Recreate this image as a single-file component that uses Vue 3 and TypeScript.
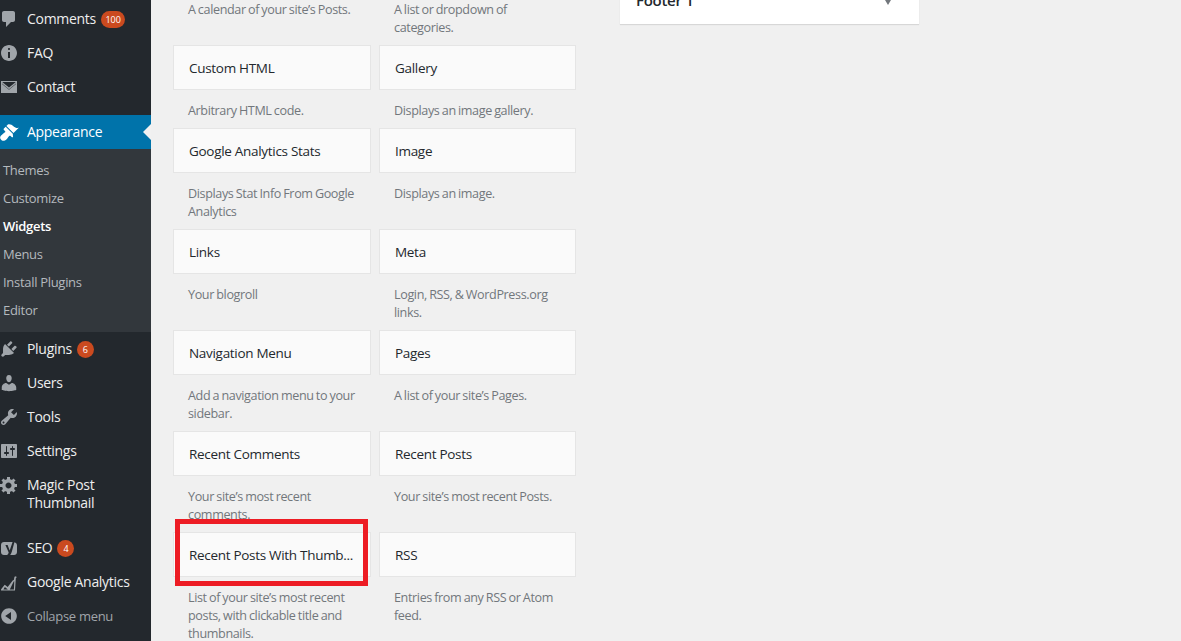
<script setup lang="ts">
interface MenuItem {
  label: string[];
  icon: string;
  badge?: string;
  gapBefore?: boolean;
  current?: boolean;
  muted?: boolean;
}
interface Widget {
  title: string;
  desc: string;
  mark?: boolean;
}

const ICONS: Record<string, string> = {
  comments: 'M5 2h9c1.1 0 2 .9 2 2v7c0 1.1-.9 2-2 2h-2l-5 5v-5H5c-1.1 0-2-.9-2-2V4c0-1.1.9-2 2-2z',
  info: 'M10 2c4.42 0 8 3.58 8 8s-3.58 8-8 8-8-3.58-8-8 3.58-8 8-8zm1 4c0-.55-.45-1-1-1s-1 .45-1 1 .45 1 1 1 1-.45 1-1zm0 9V9H9v6h2z',
  mail: 'M2 4h16v12H2V4zm1.5 1.2L10 10.6l6.5-5.4v-.2h-13v.2zM17 6.6l-7 5.6-7-5.6V7l7 5.8L17 7v-.4z',
  brush: 'M14.48 11.06L7.41 3.99l1.5-1.5c.5-.56 2.3-.47 3.51.32 1.21.8 1.43 1.28 2.91 2.1 1.18.64 2.45 1.26 4.45.85zm-.71.71L6.7 4.7 4.93 6.47c-.39.39-.39 1.02 0 1.41l1.06 1.06c.39.39.39 1.03 0 1.42-.6.6-1.43 1.11-2.21 1.69-.35.26-.7.53-1.01.84C1.43 13.71.96 15.19 1.2 16.3c.2.9 1.6 2.3 2.5 2.5 1.11.24 2.59-.23 3.94-1.58.31-.31.58-.66.84-1.01.58-.78 1.09-1.61 1.69-2.21.39-.39 1.03-.39 1.42 0l1.06 1.06c.39.39 1.02.39 1.41 0z',
  plugin: 'M13.11 4.36L9.87 7.6 8 5.73l3.24-3.24c.35-.34 1.05-.2 1.56.32.52.51.66 1.21.31 1.55zm-8 1.77l.91-1.12 9.01 9.01-1.19.84c-.71.71-2.63 1.16-3.82 1.16H6.14L4.9 17.26c-.59.59-1.54.59-2.12 0-.59-.58-.59-1.53 0-2.12l1.24-1.24v-3.88c0-1.13.4-3.19 1.09-3.89zm7.26 3.97l3.24-3.24c.34-.35 1.04-.21 1.55.31.52.51.66 1.21.31 1.55l-3.24 3.25z',
  users: 'M10 9.25c-2.27 0-2.73-3.44-2.73-3.44C7 4.02 7.82 2 9.97 2c2.16 0 2.98 2.02 2.71 3.81 0 0-.41 3.44-2.68 3.44zm0 2.57L12.72 10c2.39 0 4.52 2.33 4.52 4.53v2.49s-3.65 1.13-7.24 1.13c-3.65 0-7.24-1.13-7.24-1.13v-2.49c0-2.25 1.94-4.48 4.47-4.48z',
  tools: 'M16.68 9.77c-1.34 1.34-3.3 1.67-4.95.99l-5.41 6.52c-.99.99-2.59.99-3.58 0s-.99-2.59 0-3.57l6.52-5.42c-.68-1.65-.35-3.61.99-4.95 1.28-1.28 3.12-1.62 4.72-1.06l-2.89 2.89 2.82 2.82 2.86-2.87c.53 1.58.18 3.39-1.08 4.65zM3.81 16.21c.4.39 1.04.39 1.43 0 .4-.4.4-1.04 0-1.43-.39-.4-1.03-.4-1.43 0-.39.39-.39 1.03 0 1.43z',
  settings: 'M18 16V4c0-.55-.45-1-1-1H3c-.55 0-1 .45-1 1v12c0 .55.45 1 1 1h14c.55 0 1-.45 1-1zM8 11h1c.55 0 1 .45 1 1s-.45 1-1 1H8v1.5c0 .28-.22.5-.5.5s-.5-.22-.5-.5V13H6c-.55 0-1-.45-1-1s.45-1 1-1h1V5.5c0-.28.22-.5.5-.5s.5.22.5.5V11zm5-2h-1c-.55 0-1-.45-1-1s.45-1 1-1h1V5.5c0-.28.22-.5.5-.5s.5.22.5.5V7h1c.55 0 1 .45 1 1s-.45 1-1 1h-1v5.5c0 .28-.22.5-.5.5s-.5-.22-.5-.5V9z',
  gear: 'M18 12h-2.18c-.17.7-.44 1.35-.81 1.93l1.54 1.54-2.1 2.1-1.54-1.54c-.58.36-1.23.63-1.91.79V19H8v-2.18c-.68-.16-1.33-.43-1.91-.79l-1.54 1.54-2.12-2.12 1.54-1.54c-.36-.58-.63-1.23-.79-1.91H1V9.03h2.17c.16-.7.44-1.35.8-1.94L2.43 5.55l2.1-2.1 1.54 1.54c.58-.37 1.24-.64 1.93-.81V2h3v2.18c.68.16 1.33.43 1.91.79l1.54-1.54 2.12 2.12-1.54 1.54c.36.59.64 1.24.8 1.94H18V12zm-8.5 1.5c1.66 0 3-1.34 3-3s-1.34-3-3-3-3 1.34-3 3 1.34 3 3 3z',
  seo: 'M5 4h8.6l-1.9 5.6-1 3L8.6 7H6.4l3.3 7.6c-.3 1.2-.8 1.9-1.6 2.4H5c-1.7 0-3-1.3-3-3V7c0-1.7 1.3-3 3-3zm10.4.2C16.9 4.6 18 5.6 18 7.2v6.8c0 1.7-1.3 3-3 3h-3.8c.7-.9 1.2-2 1.6-3.2l2.6-9.6z',
  chart: 'M2 18.6l.1-1.4 3.6-4.4 3 2.2 5-6.6 1.1-.3.7-3.3 1.6-.6.5 1.4-.8.6L16 18.6H2zm2.4-1.2h4.4L5.9 15l-1.5 2.4zm6.4 0h4.1l.4-8.2-.6.2-3.9 8z',
  collapse: 'M10 2.16c4.33 0 7.84 3.51 7.84 7.84s-3.51 7.84-7.84 7.84S2.16 14.33 2.16 10 5.71 2.16 10 2.16zm2 11.72V6.12L6.18 9.97z',
};

const topMenu: MenuItem[] = [
  { label: ['Comments'], icon: 'comments', badge: '100' },
  { label: ['FAQ'], icon: 'info' },
  { label: ['Contact'], icon: 'mail' },
  { label: ['Appearance'], icon: 'brush', gapBefore: true, current: true },
];
const subMenu = ['Themes', 'Customize', 'Widgets', 'Menus', 'Install Plugins', 'Editor'];
const bottomMenu: MenuItem[] = [
  { label: ['Plugins'], icon: 'plugin', badge: '6' },
  { label: ['Users'], icon: 'users' },
  { label: ['Tools'], icon: 'tools' },
  { label: ['Settings'], icon: 'settings' },
  { label: ['Magic Post', 'Thumbnail'], icon: 'gear' },
  { label: ['SEO'], icon: 'seo', badge: '4', gapBefore: true },
  { label: ['Google Analytics'], icon: 'chart' },
  { label: ['Collapse menu'], icon: 'collapse', muted: true },
];
const widgets: Widget[] = [
  { title: 'Calendar', desc: 'A calendar of your site’s Posts.' },
  { title: 'Categories', desc: 'A list or dropdown of categories.' },
  { title: 'Custom HTML', desc: 'Arbitrary HTML code.' },
  { title: 'Gallery', desc: 'Displays an image gallery.' },
  { title: 'Google Analytics Stats', desc: 'Displays Stat Info From Google Analytics' },
  { title: 'Image', desc: 'Displays an image.' },
  { title: 'Links', desc: 'Your blogroll' },
  { title: 'Meta', desc: 'Login, RSS, & WordPress.org links.' },
  { title: 'Navigation Menu', desc: 'Add a navigation menu to your sidebar.' },
  { title: 'Pages', desc: 'A list of your site’s Pages.' },
  { title: 'Recent Comments', desc: 'Your site’s most recent comments.' },
  { title: 'Recent Posts', desc: 'Your site’s most recent Posts.' },
  { title: 'Recent Posts With Thumb...', desc: 'List of your site’s most recent posts, with clickable title and thumbnails.', mark: true },
  { title: 'RSS', desc: 'Entries from any RSS or Atom feed.' },
];
</script>

<template>
  <div class="page">
    <aside class="sidebar">
      <nav class="menu">
        <a
          v-for="item in topMenu"
          :key="item.icon"
          class="row"
          :class="{ gap: item.gapBefore, current: item.current }"
        >
          <svg class="icon" viewBox="0 0 20 20" width="20" height="20"><path fill-rule="evenodd" :d="ICONS[item.icon]" /></svg>
          <span class="label"><span v-for="l in item.label" :key="l" class="line">{{ l }}</span></span>
          <span v-if="item.badge" class="badge">{{ item.badge }}</span>
        </a>
        <ul class="sub">
          <li v-for="s in subMenu" :key="s" :class="{ on: s === 'Widgets' }">{{ s }}</li>
        </ul>
        <a
          v-for="item in bottomMenu"
          :key="item.icon"
          class="row"
          :class="{ gap: item.gapBefore, muted: item.muted }"
        >
          <svg class="icon" viewBox="0 0 20 20" width="20" height="20"><path fill-rule="evenodd" :d="ICONS[item.icon]" /></svg>
          <span class="label"><span v-for="l in item.label" :key="l" class="line">{{ l }}</span></span>
          <span v-if="item.badge" class="badge">{{ item.badge }}</span>
        </a>
      </nav>
    </aside>

    <main class="content">
      <section class="available">
        <div v-for="w in widgets" :key="w.title" class="widget">
          <div class="card">
            <h3 class="title">{{ w.title }}</h3>
            <span v-if="w.mark" class="mark"></span>
          </div>
          <p class="desc">{{ w.desc }}</p>
        </div>
      </section>
      <section class="areas">
        <div class="area">
          <span class="area-name">Footer 1</span>
          <span class="caret"></span>
        </div>
      </section>
    </main>
  </div>
</template>

<style scoped>
.page {
  display: flex;
  width: 1181px;
  height: 641px;
  overflow: hidden;
  background: #f0f0f0;
  font-family: "Open Sans", "Noto Sans", sans-serif;
  letter-spacing: -0.3px;
}
.sidebar {
  flex: 0 0 151px;
  background: #23282d;
  overflow: hidden;
}
.menu {
  display: flex;
  flex-direction: column;
  padding-top: 2px;
}
.row {
  position: relative;
  display: flex;
  align-items: flex-start;
  padding: 8px 0;
  font-size: 14px;
  line-height: 18px;
  color: #eee;
}
.row.gap {
  margin-top: 11px;
}
.row.current {
  background: #0073aa;
  color: #fff;
}
.row.current::after {
  content: "";
  position: absolute;
  right: 0;
  top: 50%;
  margin-top: -8px;
  border: 8px solid transparent;
  border-right-color: #f1f1f1;
  border-left-width: 0;
}
.row.muted {
  color: #a0a5aa;
  font-size: 13px;
}
.icon {
  flex: none;
  margin: -1px 8px -1px -1px;
  fill: #a0a5aa;
}
.row.current .icon {
  fill: #fff;
}
.label {
  display: flex;
  flex-direction: column;
}
.line {
  white-space: nowrap;
}
.badge {
  flex: none;
  box-sizing: border-box;
  min-width: 17px;
  height: 17px;
  margin: 1px 0 0 5px;
  padding: 0 4.5px;
  border-radius: 9px;
  background: #ca4a1f;
  color: #fff;
  font-size: 9px;
  line-height: 17px;
  text-align: center;
  letter-spacing: 0;
}
.sub {
  margin: 0;
  padding: 7px 0 8px;
  list-style: none;
  background: #32373c;
}
.sub li {
  padding-left: 3px;
  height: 28px;
  font-size: 13px;
  line-height: 28px;
  color: #b4b9be;
}
.sub li.on {
  color: #fff;
  font-weight: 600;
}
.content {
  flex: 1;
  display: flex;
  align-items: flex-start;
  padding-left: 22px;
}
.available {
  flex: 0 0 403px;
  display: grid;
  grid-template-columns: 198px 197px;
  column-gap: 8px;
  margin-top: -56px;
}
.card {
  position: relative;
  box-sizing: border-box;
  height: 45px;
  padding: 0 15px;
  border: 1px solid #e5e5e5;
  background: #fafafa;
  display: flex;
  align-items: center;
}
.title {
  margin: 0;
  font-size: 13.5px;
  font-weight: 500;
  color: #23282d;
  white-space: nowrap;
}
.mark {
  position: absolute;
  left: 1px;
  right: 2px;
  top: -14px;
  bottom: -10px;
  border: 5px solid #ed1c24;
}
.desc {
  margin: 0;
  padding: 12px 15px 8px 15px;
  font-size: 12.6px;
  line-height: 18px;
  letter-spacing: -0.38px;
  word-spacing: -0.6px;
  color: #72777c;
}
.areas {
  flex: 0 0 299px;
  margin-left: 44px;
}
.area {
  box-sizing: border-box;
  display: flex;
  justify-content: space-between;
  height: 44px;
  margin-top: -20px;
  padding: 11px 28px 0 16px;
  background: #fff;
  box-shadow: 0 1px 1px rgba(0, 0, 0, 0.1);
}
.area-name {
  font-size: 15px;
  font-weight: 600;
  line-height: 18px;
  color: #23282d;
}
.caret {
  width: 0;
  height: 0;
  margin-top: 9px;
  border: 3px solid transparent;
  border-top: 5px solid #72777c;
  border-bottom-width: 0;
}
</style>
